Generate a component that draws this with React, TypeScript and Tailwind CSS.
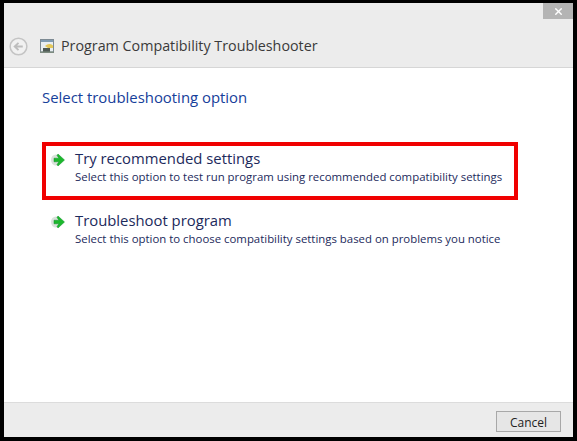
import React from 'react';
import { X } from 'lucide-react';

function GreenArrow() {
  return (
    <svg width="15" height="14" viewBox="0 0 15 14" className="shrink-0">
      <ellipse cx="5" cy="7" rx="5" ry="5.5" fill="#c4d2c8" opacity="0.65" />
      <path d="M7 1 L13.5 7 L7 13 L6 11.5 L8 8.8 L3 8.8 L3 5.2 L8 5.2 L6 2.5 Z" fill="#1cb82c" stroke="#0f8f2a" strokeWidth="0.5" />
    </svg>
  );
}

function BackIcon() {
  return (
    <svg width="19" height="19" viewBox="0 0 20 20" className="shrink-0">
      <circle cx="10" cy="10" r="8.8" fill="#f1f1f1" stroke="#c4c4c4" strokeWidth="1.6" />
      <path d="M14.5 10 H6.5 M10 6.2 L6 10 L10 13.8" fill="none" stroke="#bdbdbd" strokeWidth="2" />
    </svg>
  );
}

function ProgramIcon() {
  return (
    <svg width="16" height="16" viewBox="0 0 16 16" className="shrink-0">
      <rect x="1.5" y="1.5" width="13" height="12.5" fill="#e8eef2" stroke="#7d8a93" />
      <rect x="2" y="2" width="12" height="2" fill="#7f9bb3" />
      <path d="M6 8 Q10 4.5 14 7.5 L14 10 L9 10 Z" fill="#e3c75a" />
      <rect x="4" y="10" width="7" height="4" fill="#4f5a55" />
      <rect x="1" y="13.5" width="14" height="1.5" fill="#7d8b80" />
    </svg>
  );
}

interface OptionProps {
  title: string;
  description: string;
}

function Option({ title, description }: OptionProps) {
  return (
    <div className="flex items-start">
      <div className="w-[29px] pl-[5px] pt-[5px]">
        <GreenArrow />
      </div>
      <div>
        <div className="text-[14.85px] leading-[20px] text-[#1c2a5c] whitespace-nowrap">{title}</div>
        <div className="mt-[1px] text-[11.4px] leading-[16px] text-[#1c2a5c] whitespace-nowrap">{description}</div>
      </div>
    </div>
  );
}

export default function App() {
  return (
    <div className="w-[577px] h-[441px] bg-black pt-[3px] pb-[4px] px-[4px] overflow-hidden font-['Open_Sans','Noto_Sans',sans-serif]">
      <div className="relative w-[569px] h-[434px] bg-white flex flex-col">
        {/* Close button */}
        <div className="absolute right-0 top-0 w-[30px] h-[16px] bg-[#b4b4b4] flex items-center justify-center">
          <X size={11} strokeWidth={3} className="text-white" />
        </div>

        {/* Header */}
        <div className="h-[65px] bg-[#ececec] border-b border-[#d6d6d6] flex items-center pl-[5px] pt-[22px] shrink-0">
          <BackIcon />
          <div className="ml-[11px] mr-[6px] flex items-center">
            <ProgramIcon />
          </div>
          <span className="text-[14.3px] leading-[20px] text-[#3a3a3a] whitespace-nowrap">Program Compatibility Troubleshooter</span>
        </div>

        {/* Content */}
        <div className="flex-1 pl-[38px] pt-[19px]">
          <div className="text-[14.9px] leading-[20px] text-[#16409a]">Select troubleshooting option</div>
          <div className="mt-[35px] w-[476px] h-[58px] border-[4px] border-[#f00000] pt-[2px]">
            <Option
              title="Try recommended settings"
              description="Select this option to test run program using recommended compatibility settings"
            />
          </div>
          <div className="mt-[10px] pl-[4px]">
            <Option
              title="Troubleshoot program"
              description="Select this option to choose compatibility settings based on problems you notice"
            />
          </div>
        </div>

        {/* Footer */}
        <div className="h-[35px] bg-[#ececec] border-t border-[#dcdcdc] flex items-start justify-end pr-[12px] pt-[8px] shrink-0">
          <button className="w-[65px] h-[21px] bg-[#e6e6e6] border border-[#a8a8a8] text-[12px] leading-[19px] pt-[1px] text-[#222]">
            Cancel
          </button>
        </div>
      </div>
    </div>
  );
}
